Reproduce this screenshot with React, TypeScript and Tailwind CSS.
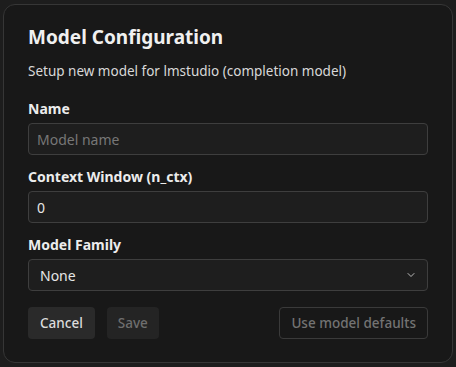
import React from "react";

const ChevronDown = () => (
  <svg width="12" height="12" viewBox="0 0 24 24" fill="none" stroke="currentColor" strokeWidth="1.75" strokeLinecap="round" strokeLinejoin="round">
    <path d="m6 9 6 6 6-6" />
  </svg>
);

const Field = ({ label, children }: { label: string; children: React.ReactNode }) => (
  <div className="flex flex-col gap-[4px]">
    <label className="text-[14px] leading-[20px] font-bold text-[#ececec]">{label}</label>
    {children}
  </div>
);

export default function App() {
  return (
    <div
      className="h-[367px] w-[456px] bg-[#1d1d1d] pt-[4px] pl-[3px]"
      style={{ fontFamily: '"Noto Sans", "Open Sans", sans-serif' }}
    >
      <div className="w-[450px] h-[359px] rounded-[12px] border border-[#363636] bg-[#181818] px-[24px] pt-[18px]">
        <h1 className="text-[19px] leading-[28px] font-bold text-[#f0f0f0]">Model Configuration</h1>
        <p className="mt-[10px] text-[13.5px] leading-[20px] text-[#d8d8d8]">
          Setup new model for lmstudio (completion model)
        </p>

        <div className="mt-[18px] flex flex-col gap-[12px]">
          <Field label="Name">
            <input
              placeholder="Model name"
              className="h-[32px] w-full rounded-[4px] border border-[#3e3e3e] bg-[#1e1e1e] px-[8px] text-[14px] text-[#e0e0e0] placeholder:text-[#777] outline-none"
            />
          </Field>
          <Field label="Context Window (n_ctx)">
            <input
              defaultValue="0"
              className="h-[32px] w-full rounded-[4px] border border-[#3e3e3e] bg-[#1e1e1e] px-[8px] text-[14px] text-[#e6e6e6] outline-none"
            />
          </Field>
          <Field label="Model Family">
            <div className="flex h-[32px] w-full items-center justify-between rounded-[4px] border border-[#3e3e3e] bg-[#1e1e1e] pl-[11px] pr-[10px] text-[14px] text-[#e6e6e6]">
              <span>None</span>
              <span className="text-[#cfcfcf]">
                <ChevronDown />
              </span>
            </div>
          </Field>
        </div>

        <div className="mt-[16px] flex items-center">
          <button className="h-[32px] rounded-[4px] bg-[#2a2a2a] px-[12px] text-[13.5px] font-medium text-[#dcdcdc]">
            Cancel
          </button>
          <button
            disabled
            className="ml-[12px] h-[32px] rounded-[4px] bg-[#242424] px-[11px] text-[13.5px] font-medium text-[#6e6e6e]"
          >
            Save
          </button>
          <button
            disabled
            className="ml-auto h-[32px] rounded-[4px] border border-[#3a3a3a] bg-transparent px-[11px] text-[13.5px] font-medium text-[#737373]"
          >
            Use model defaults
          </button>
        </div>
      </div>
    </div>
  );
}
